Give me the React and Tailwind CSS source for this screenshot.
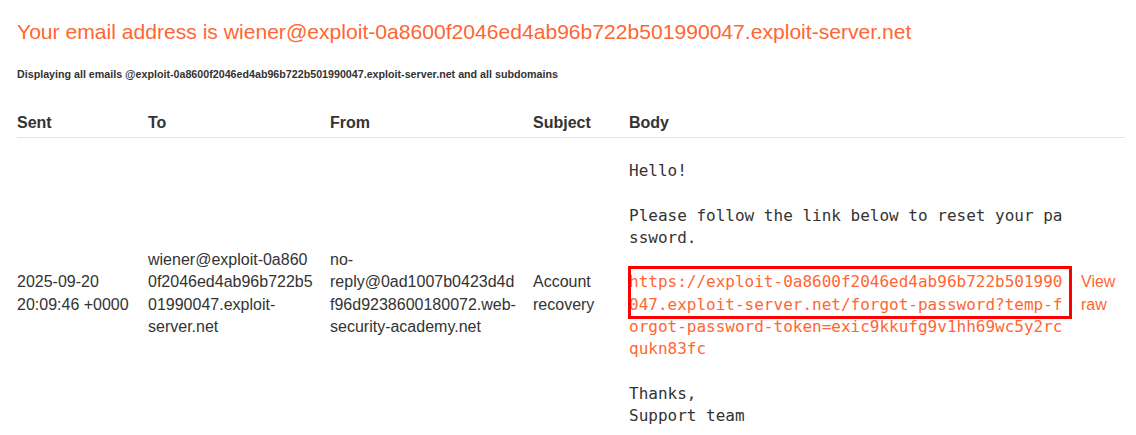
import React from 'react';

const bodyLines = [
  'Hello!',
  '',
  'Please follow the link below to reset your password.',
  '',
];

const resetUrl =
  'https://exploit-0a8600f2046ed4ab96b722b501990047.exploit-server.net/forgot-password?temp-forgot-password-token=exic9kkufg9v1hh69wc5y2rcqukn83fc';

const EmailBody = () => (
  <div className="relative">
    <pre className="m-0 whitespace-pre-wrap break-all font-['DejaVu_Sans_Mono',monospace] text-[16px] leading-[22.27px] text-[#333332]">
      {bodyLines.join('\n') + '\n'}
      <a href="#" className="text-[#ff6633]">{resetUrl}</a>
      {'\n\nThanks,\nSupport team'}
    </pre>
    {/* highlighted link annotation */}
    <div className="absolute left-[-1px] top-[106px] h-[53px] w-[444px] border-[3px] border-[#ff0000]" />
  </div>
);

export default function App() {
  return (
    <div className="min-h-screen bg-white pl-[17px] pr-[11px] pt-[19px] font-['Liberation_Sans',Arial,sans-serif] text-[#333332]">
      <h1 className="text-[21.1px] font-normal leading-[26px] text-[#ff6633]">
        Your email address is wiener@exploit-0a8600f2046ed4ab96b722b501990047.exploit-server.net
      </h1>
      <h4 className="mt-[23px] text-[10.7px] font-bold leading-[13px]">
        Displaying all emails @exploit-0a8600f2046ed4ab96b722b501990047.exploit-server.net and all subdomains
      </h4>

      <table className="mt-[31px] w-[1108px] table-fixed border-collapse text-[16px]">
        <colgroup>
          <col className="w-[131px]" />
          <col className="w-[182px]" />
          <col className="w-[203px]" />
          <col className="w-[96px]" />
          <col className="w-[452px]" />
          <col className="w-[44px]" />
        </colgroup>
        <thead>
          <tr className="border-b border-[#e6e6e6]">
            <th className="pb-[3px] pr-4 text-left font-bold leading-[22px]">Sent</th>
            <th className="pb-[3px] pr-4 text-left font-bold leading-[22px]">To</th>
            <th className="pb-[3px] pr-4 text-left font-bold leading-[22px]">From</th>
            <th className="pb-[3px] pr-4 text-left font-bold leading-[22px]">Subject</th>
            <th className="pb-[3px] pr-4 text-left font-bold leading-[22px]">Body</th>
            <th className="pb-[3px]"></th>
          </tr>
        </thead>
        <tbody>
          <tr className="align-middle leading-[22.4px]">
            <td className="py-[22px] pr-4 break-words">2025-09-20 20:09:46 +0000</td>
            <td className="py-[22px] pr-4 break-words">
              {'wiener@exploit-\u20600a8600f2046ed4ab96b722b501990047.exploit-server.net'}
            </td>
            <td className="py-[22px] pr-4 break-words">
              no-reply@0ad1007b0423d4df96d9238600180072.web-security-academy.net
            </td>
            <td className="py-[22px] pr-4 break-words">Account recovery</td>
            <td className="py-[22px] pr-4">
              <EmailBody />
            </td>
            <td className="py-[22px]">
              <a href="#" className="text-[#ff6633]">View raw</a>
            </td>
          </tr>
        </tbody>
      </table>
    </div>
  );
}
